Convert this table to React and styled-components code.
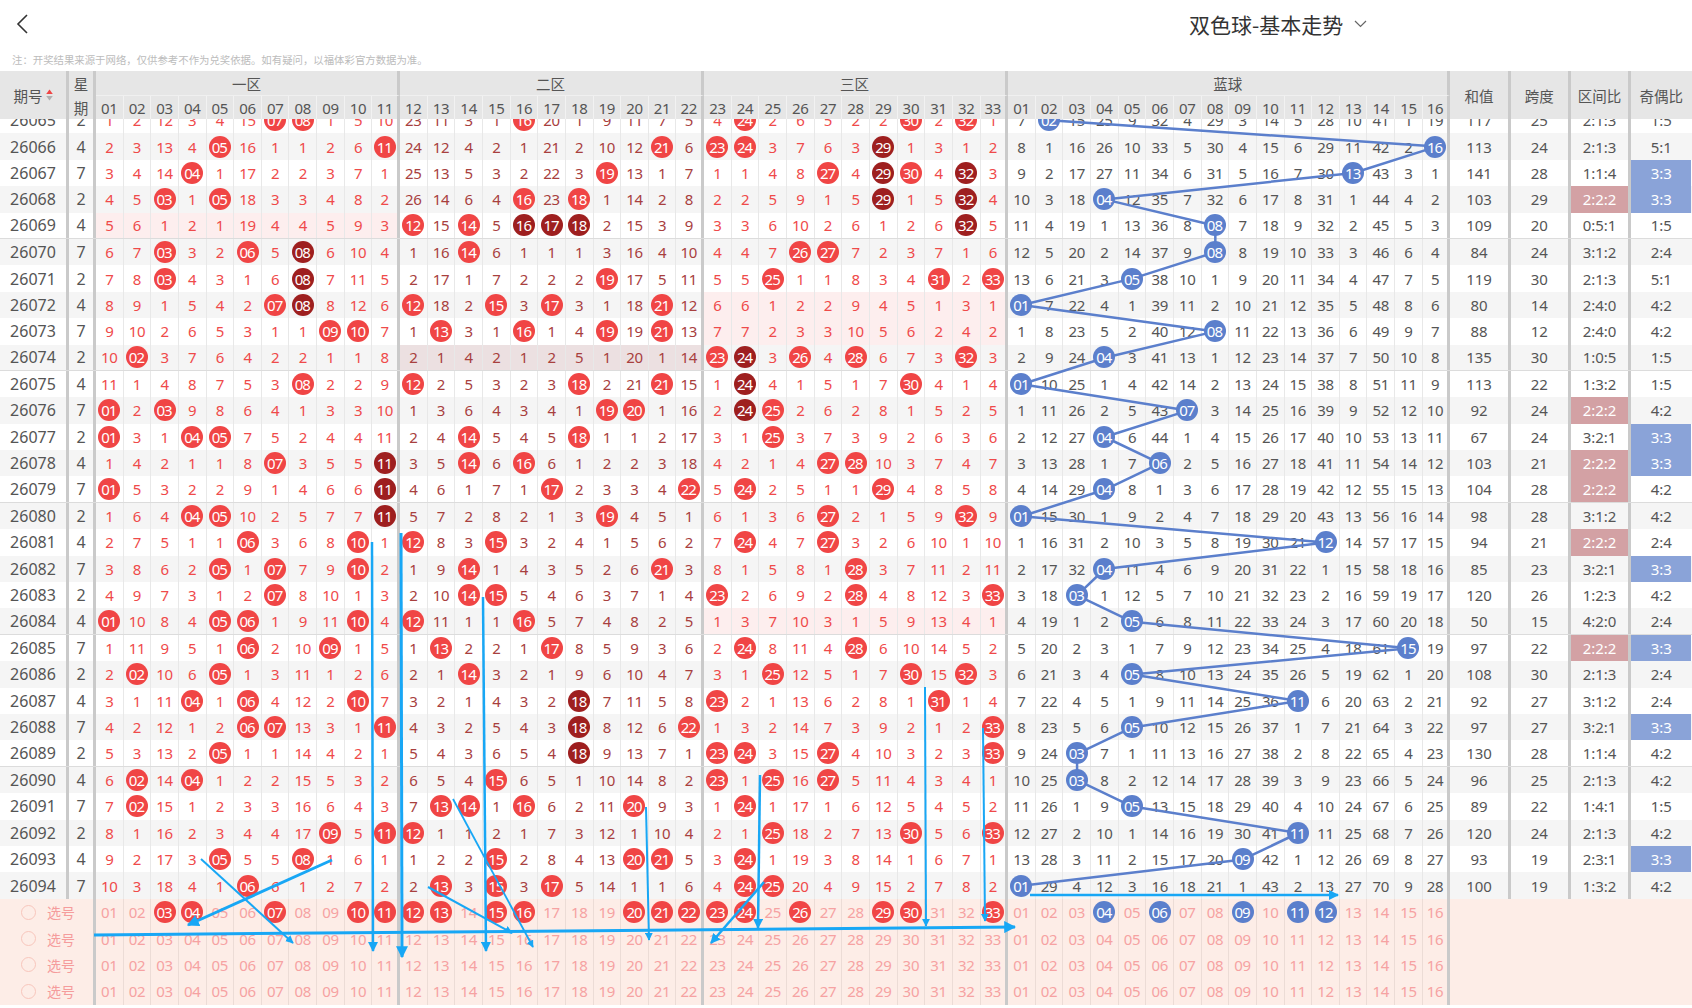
import React, { useLayoutEffect, useRef } from 'react';
import styled, { createGlobalStyle } from 'styled-components';

const NW = 27.65;
const RH = 26.4;
const SW = 60.25;
const BLUE_X0 = 96 + 33 * NW;
const SEP = '#cacaca';

const DRAWS = [
  [26065, 2, [7, 8, 16, 24, 30, 32], 2],
  [26066, 4, [5, 11, 21, 23, 24, 29], 16],
  [26067, 7, [4, 19, 27, 29, 30, 32], 13],
  [26068, 2, [3, 5, 16, 18, 29, 32], 4],
  [26069, 4, [12, 14, 16, 17, 18, 32], 8],
  [26070, 7, [3, 6, 8, 14, 26, 27], 8],
  [26071, 2, [3, 8, 19, 25, 31, 33], 5],
  [26072, 4, [7, 8, 12, 15, 17, 21], 1],
  [26073, 7, [9, 10, 13, 16, 19, 21], 8],
  [26074, 2, [2, 23, 24, 26, 28, 32], 4],
  [26075, 4, [8, 12, 18, 21, 24, 30], 1],
  [26076, 7, [1, 3, 19, 20, 24, 25], 7],
  [26077, 2, [1, 4, 5, 14, 18, 25], 4],
  [26078, 4, [7, 11, 14, 16, 27, 28], 6],
  [26079, 7, [1, 11, 17, 22, 24, 29], 4],
  [26080, 2, [4, 5, 11, 19, 27, 32], 1],
  [26081, 4, [6, 10, 12, 15, 24, 27], 12],
  [26082, 7, [5, 7, 10, 14, 21, 28], 4],
  [26083, 2, [7, 14, 15, 23, 28, 33], 3],
  [26084, 4, [1, 5, 6, 10, 12, 16], 5],
  [26085, 7, [6, 9, 13, 17, 24, 28], 15],
  [26086, 2, [2, 5, 14, 25, 30, 32], 5],
  [26087, 4, [4, 6, 10, 18, 23, 31], 11],
  [26088, 7, [6, 7, 11, 18, 22, 33], 5],
  [26089, 2, [5, 18, 23, 24, 27, 33], 3],
  [26090, 4, [2, 4, 15, 23, 25, 27], 3],
  [26091, 7, [2, 13, 14, 16, 20, 24], 5],
  [26092, 2, [9, 11, 12, 25, 30, 33], 11],
  [26093, 4, [5, 8, 15, 20, 21, 24], 9],
  [26094, 7, [6, 13, 15, 17, 24, 25], 1],
];

const RED_INIT = [1, 2, 12, 3, 4, 15, 0, 0, 1, 5, 10, 23, 11, 3, 1, 0, 20, 1, 9, 11, 7, 5, 4, 0, 2, 6, 5, 2, 2, 0, 2, 0, 1];
const BLUE_INIT = [7, 0, 15, 25, 9, 32, 4, 29, 3, 14, 5, 28, 10, 41, 1, 19];

const SEL_RED = [3, 4, 7, 10, 11, 12, 13, 15, 16, 20, 21, 22, 23, 24, 26, 29, 30, 33];
const SEL_BLUE = [4, 6, 9, 11, 12];

const SPECIAL_BG = { '26074-1': '#ece0e1' };

const pad = (n) => String(n).padStart(2, '0');
const zoneOf = (c) => (c <= 11 ? 0 : c <= 22 ? 1 : 2);

function buildRows() {
  const rows = [];
  let prevR = null;
  let prevB = null;
  DRAWS.forEach(([qh, xq, reds, blue], i) => {
    const red = [];
    for (let c = 1; c <= 33; c++) {
      if (reds.includes(c)) red.push(0);
      else if (i === 0) red.push(RED_INIT[c - 1]);
      else red.push(prevR[c - 1] === 0 ? 1 : prevR[c - 1] + 1);
    }
    const bl = [];
    for (let b = 1; b <= 16; b++) {
      if (b === blue) bl.push(0);
      else if (i === 0) bl.push(BLUE_INIT[b - 1]);
      else bl.push(prevB[b - 1] === 0 ? 1 : prevB[b - 1] + 1);
    }
    prevR = red;
    prevB = bl;
    const zones = [0, 0, 0];
    reds.forEach((c) => { zones[zoneOf(c)] += 1; });
    const sum = reds.reduce((a, b) => a + b, 0);
    const odd = reds.filter((c) => c % 2 === 1).length;
    rows.push({
      qh, xq, reds, blue, red, bl, zones,
      sum, span: Math.max(...reds) - Math.min(...reds),
      zoneRatio: zones.join(':'),
      oddRatio: `${odd}:${6 - odd}`,
    });
  });
  const has = (i, c) => i >= 0 && i < rows.length && rows[i].reds.includes(c);
  rows.forEach((row, i) => {
    row.dark = {};
    row.reds.forEach((c) => {
      let v = 1;
      for (let k = i - 1; has(k, c); k--) v++;
      for (let k = i + 1; has(k, c); k++) v++;
      let h = 1;
      for (let k = c - 1; row.reds.includes(k); k--) h++;
      for (let k = c + 1; row.reds.includes(k); k++) h++;
      row.dark[c] = v >= 3 || h >= 3;
    });
  });
  return rows;
}

const ROWS = buildRows();

const ARROWS = [
  { d: [372, 542, 373, 951], w: 2.5 },
  { d: [401, 533, 402, 957], w: 3 },
  { d: [483, 597, 486, 951], w: 2.5 },
  { d: [453, 799, 533, 947], w: 1.8 },
  { d: [428, 887, 512, 933], w: 2 },
  { d: [332, 860, 188, 925], w: 3 },
  { d: [201, 859, 293, 943], w: 2 },
  { d: [94, 935, 1015, 927], w: 3 },
  { d: [646, 807, 649, 940], w: 2 },
  { d: [760, 775, 758, 928], w: 2.5 },
  { d: [764, 882, 711, 943], w: 2.5 },
  { d: [925, 687, 926, 926], w: 2 },
  { d: [983, 728, 985, 921], w: 2 },
  { d: [1030, 895, 1338, 895], w: 2.5 },
];

const GlobalStyle = createGlobalStyle`
  *, *::before, *::after { box-sizing: border-box; }
  html, body { margin: 0; padding: 0; background: #ffffff; }
  body {
    font-family: "Noto Sans", "Noto Sans CJK SC", sans-serif;
    overflow: hidden;
  }
`;

const Page = styled.div`
  position: relative;
  width: 1692px;
  height: 1008px;
  overflow: hidden;
  background: #ffffff;
`;

const TopBar = styled.header`
  height: 48px;
  display: grid;
  grid-template-columns: 1189px auto;
  align-items: center;
`;

const BackButton = styled.button`
  justify-self: start;
  display: flex;
  align-items: center;
  height: 48px;
  padding: 0 0 0 15px;
  border: 0;
  background: none;
  cursor: pointer;
`;

const Title = styled.h1`
  margin: 0;
  display: flex;
  align-items: center;
  gap: 11px;
  font-family: "Noto Sans CJK SC", "Noto Sans", sans-serif;
  font-size: 21px;
  font-weight: 400;
  color: #333333;
`;

const Note = styled.p`
  margin: 0;
  height: 23px;
  line-height: 23px;
  padding-left: 12px;
  font-family: "Noto Sans CJK SC", sans-serif;
  font-size: 10.4px;
  color: #bcbcbc;
`;

const Header = styled.div`
  display: flex;
  height: 48px;
  background: #e6e6e6;
  color: #555555;
  font-size: 14.5px;
`;

const HeadQh = styled.div`
  flex: none;
  width: 69px;
  border-right: 3px solid ${SEP};
  display: flex;
  align-items: center;
  justify-content: center;
  gap: 3px;
  font-family: "Noto Sans CJK SC", sans-serif;
`;

const HeadXq = styled.div`
  flex: none;
  width: 27px;
  border-right: 3px solid ${SEP};
  display: grid;
  grid-template-rows: 25px 23px;
  place-items: center;
  font-family: "Noto Sans CJK SC", sans-serif;
`;

const ZoneHead = styled.div`
  flex: none;
  display: flex;
  flex-direction: column;
`;

const ZoneLabel = styled.div`
  height: 25px;
  display: flex;
  align-items: center;
  justify-content: center;
  border-right: 3px solid ${SEP};
  border-bottom: 1px solid #f0f0f0;
  font-family: "Noto Sans CJK SC", sans-serif;
`;

const NumHeadRow = styled.div`
  display: flex;
  height: 23px;
`;

const NumHead = styled.div`
  flex: none;
  width: ${NW}px;
  display: flex;
  align-items: center;
  justify-content: center;
  border-right: ${(p) => (p.$last ? `3px solid ${SEP}` : '1px solid #f2f2f2')};
  font-size: 15px;
  letter-spacing: -0.3px;
`;

const HeadStat = styled.div`
  flex: none;
  width: ${SW}px;
  display: flex;
  align-items: center;
  justify-content: center;
  border-right: ${(p) => (p.$last ? 'none' : `3px solid ${SEP}`)};
  font-family: "Noto Sans CJK SC", sans-serif;
`;

const BodyScroll = styled.div`
  position: relative;
  height: 780px;
  overflow: hidden;
`;

const BodyInner = styled.div`
  position: relative;
`;

const Row = styled.div`
  display: flex;
  height: ${RH}px;
  background: ${(p) => (p.$alt ? '#f5f5f5' : '#ffffff')};
  border-bottom: ${(p) => (p.$groupEnd ? '1px solid #dcdcdc' : '0')};
`;

const QhCell = styled.div`
  flex: none;
  width: 69px;
  border-right: 3px solid ${SEP};
  display: flex;
  align-items: center;
  justify-content: center;
  color: #555555;
  font-size: 16px;
`;

const XqCell = styled.div`
  flex: none;
  width: 27px;
  border-right: 3px solid ${SEP};
  display: flex;
  align-items: center;
  justify-content: center;
  color: #555555;
  font-size: 16px;
`;

const NumCell = styled.div`
  flex: none;
  width: ${NW}px;
  display: flex;
  align-items: center;
  justify-content: center;
  border-right: ${(p) => (p.$last ? `3px solid ${SEP}` : `1px solid ${p.$line || '#e8e8e8'}`)};
  background: ${(p) => p.$bg || 'transparent'};
  color: ${(p) => p.$color};
  font-size: 15px;
  letter-spacing: -0.3px;
  white-space: nowrap;
`;

const Ball = styled.span`
  position: relative;
  z-index: 2;
  flex: none;
  width: 22px;
  height: 22px;
  border-radius: 50%;
  background: ${(p) => p.$bg};
  color: #ffffff;
  display: flex;
  align-items: center;
  justify-content: center;
  font-size: 15px;
  letter-spacing: -1px;
  text-indent: -1px;
`;

const StatCell = styled.div`
  flex: none;
  width: ${SW}px;
  display: flex;
  align-items: center;
  justify-content: center;
  border-right: ${(p) => (p.$last ? 'none' : `3px solid ${SEP}`)};
  background: ${(p) => p.$hl || 'transparent'};
  color: ${(p) => (p.$hl ? '#ffffff' : '#555555')};
  font-size: 15px;
`;

const TrendSvg = styled.svg`
  position: absolute;
  top: 0;
  left: 0;
  z-index: 1;
  pointer-events: none;
`;

const SelectArea = styled.div`
  background: #fdede7;
`;

const SelRow = styled.div`
  display: flex;
  height: ${RH}px;
`;

const SelLabel = styled.label`
  flex: none;
  width: 96px;
  border-right: 3px solid ${SEP};
  display: flex;
  align-items: center;
  gap: 11px;
  padding-left: 21px;
  color: #f59c9c;
  font-family: "Noto Sans CJK SC", sans-serif;
  font-size: 14px;
`;

const Radio = styled.span`
  flex: none;
  width: 15px;
  height: 15px;
  border-radius: 50%;
  border: 1px solid #f8c6bc;
`;

const SelStats = styled.div`
  flex: none;
  width: ${SW * 4}px;
`;

const Annot = styled.svg`
  position: absolute;
  top: 0;
  left: 0;
  z-index: 10;
  pointer-events: none;
`;

const RED_BALL = '#f04545';
const DARK_BALL = '#9e1f1f';
const BLUE_BALL = '#5b7fcc';

function SortIcon() {
  return (
    <svg width="7" height="12" viewBox="0 0 7 12">
      <path d="M3.5 0.5 L6.8 5 L0.2 5 Z" fill="#f04545" />
      <path d="M0.2 7 L6.8 7 L3.5 11.5 Z" fill="#b0b0b0" />
    </svg>
  );
}

function Table() {
  const scrollRef = useRef(null);
  useLayoutEffect(() => {
    if (scrollRef.current) scrollRef.current.scrollTop = 12;
  }, []);

  const zonesDef = [
    { label: '一区', from: 1, to: 11 },
    { label: '二区', from: 12, to: 22 },
    { label: '三区', from: 23, to: 33 },
  ];

  const trendPoints = ROWS.map((r, i) => `${BLUE_X0 + (r.blue - 1) * NW + NW / 2 - 0.5},${i * RH + RH / 2}`).join(' ');

  return (
    <>
      <Header>
        <HeadQh>
          期号
          <SortIcon />
        </HeadQh>
        <HeadXq>
          <span>星</span>
          <span>期</span>
        </HeadXq>
        {zonesDef.map((z) => (
          <ZoneHead key={z.label}>
            <ZoneLabel>{z.label}</ZoneLabel>
            <NumHeadRow>
              {Array.from({ length: z.to - z.from + 1 }, (_, k) => z.from + k).map((c) => (
                <NumHead key={c} $last={c === z.to}>{pad(c)}</NumHead>
              ))}
            </NumHeadRow>
          </ZoneHead>
        ))}
        <ZoneHead>
          <ZoneLabel>蓝球</ZoneLabel>
          <NumHeadRow>
            {Array.from({ length: 16 }, (_, k) => k + 1).map((b) => (
              <NumHead key={b} $last={b === 16}>{pad(b)}</NumHead>
            ))}
          </NumHeadRow>
        </ZoneHead>
        <HeadStat>和值</HeadStat>
        <HeadStat>跨度</HeadStat>
        <HeadStat>区间比</HeadStat>
        <HeadStat $last>奇偶比</HeadStat>
      </Header>

      <BodyScroll ref={scrollRef}>
        <BodyInner>
          {ROWS.map((row, i) => (
            <Row key={row.qh} $alt={i % 2 === 1} $groupEnd={row.qh % 5 === 4 && i < ROWS.length - 1}>
              <QhCell>{row.qh}</QhCell>
              <XqCell>{row.xq}</XqCell>
              {row.red.map((v, k) => {
                const c = k + 1;
                const z = zoneOf(c);
                const empty = row.zones[z] === 0;
                const bg = empty ? SPECIAL_BG[`${row.qh}-${z}`] || '#fdeeee' : undefined;
                return (
                  <NumCell
                    key={c}
                    $last={c === 11 || c === 22 || c === 33}
                    $bg={bg}
                    $color={z === 1 ? '#a8403e' : '#ef4a4a'}
                  >
                    {v === 0 ? <Ball $bg={row.dark[c] ? DARK_BALL : RED_BALL}>{pad(c)}</Ball> : v}
                  </NumCell>
                );
              })}
              {row.bl.map((v, k) => {
                const b = k + 1;
                return (
                  <NumCell key={`b${b}`} $last={b === 16} $color="#555555">
                    {v === 0 ? <Ball $bg={BLUE_BALL}>{pad(b)}</Ball> : v}
                  </NumCell>
                );
              })}
              <StatCell>{row.sum}</StatCell>
              <StatCell>{row.span}</StatCell>
              <StatCell $hl={row.zoneRatio === '2:2:2' ? '#d3a1a4' : undefined}>{row.zoneRatio}</StatCell>
              <StatCell $last $hl={row.oddRatio === '3:3' ? '#8aa3d8' : undefined}>{row.oddRatio}</StatCell>
            </Row>
          ))}
          <TrendSvg width="1692" height={ROWS.length * RH}>
            <polyline points={trendPoints} fill="none" stroke="#5b7fcc" strokeWidth="2.5" strokeLinejoin="round" />
          </TrendSvg>
        </BodyInner>
      </BodyScroll>

      <SelectArea>
        {[0, 1, 2, 3].map((r) => (
          <SelRow key={r}>
            <SelLabel>
              <Radio />
              选号
            </SelLabel>
            {Array.from({ length: 33 }, (_, k) => k + 1).map((c) => (
              <NumCell key={c} $last={c === 11 || c === 22 || c === 33} $color="#f6a2a2" $line="#ecdcd6">
                {r === 0 && SEL_RED.includes(c) ? <Ball $bg={RED_BALL}>{pad(c)}</Ball> : pad(c)}
              </NumCell>
            ))}
            {Array.from({ length: 16 }, (_, k) => k + 1).map((b) => (
              <NumCell key={`b${b}`} $last={b === 16} $color="#f6a2a2" $line="#ecdcd6">
                {r === 0 && SEL_BLUE.includes(b) ? <Ball $bg={BLUE_BALL}>{pad(b)}</Ball> : pad(b)}
              </NumCell>
            ))}
            <SelStats />
          </SelRow>
        ))}
      </SelectArea>
    </>
  );
}

export default function App() {
  return (
    <Page>
      <GlobalStyle />
      <TopBar>
        <BackButton aria-label="返回">
          <svg width="14" height="22" viewBox="0 0 14 22">
            <path d="M12 2 L3 11 L12 20" fill="none" stroke="#333333" strokeWidth="1.6" />
          </svg>
        </BackButton>
        <Title>
          双色球-基本走势
          <svg width="13" height="8" viewBox="0 0 13 8">
            <path d="M1 1 L6.5 6.5 L12 1" fill="none" stroke="#666666" strokeWidth="1.2" />
          </svg>
        </Title>
      </TopBar>
      <Note>注：开奖结果来源于网络，仅供参考不作为兑奖依据。如有疑问，以福体彩官方数据为准。</Note>
      <Table />
      <Annot width="1692" height="1008" viewBox="0 0 1692 1008">
        <defs>
          <marker id="arrowHead" viewBox="0 0 10 10" refX="9" refY="5" markerWidth="4" markerHeight="4" orient="auto">
            <path d="M0 0 L10 5 L0 10 Z" fill="#18a7f5" />
          </marker>
        </defs>
        {ARROWS.map((a, i) => (
          <line
            key={i}
            x1={a.d[0]}
            y1={a.d[1]}
            x2={a.d[2]}
            y2={a.d[3]}
            stroke="#18a7f5"
            strokeWidth={a.w}
            markerEnd="url(#arrowHead)"
          />
        ))}
      </Annot>
    </Page>
  );
}
